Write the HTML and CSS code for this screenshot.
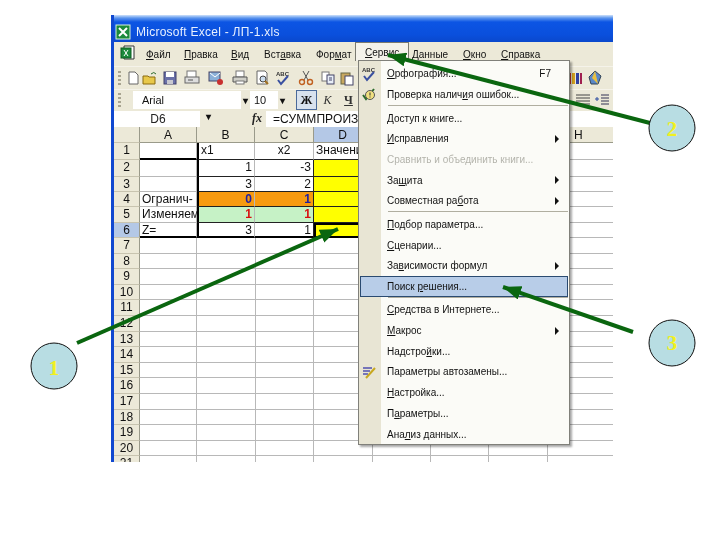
FILE: index.html
```html
<!DOCTYPE html>
<html lang="ru">
<head>
<meta charset="utf-8">
<title>Microsoft Excel - ЛП-1.xls</title>
<link rel="stylesheet" href="styles.css">
</head>
<body>
<div class="stage">
  <div class="window">
    <div class="titlebar">
      <svg class="appicon" width="16" height="16" viewBox="0 0 16 16"><rect x="1" y="1" width="14" height="14" fill="#1c8a3c" stroke="#d8f0d8"/><path d="M4 4l8 8M12 4l-8 8" stroke="#fff" stroke-width="2"/></svg>
      <span>Microsoft Excel - ЛП-1.xls</span>
    </div>
    <div class="menubar">
      <svg class="docicon" width="18" height="18" viewBox="0 0 18 18"><path d="M4 1h10v13H4z" fill="#fff" stroke="#333"/><rect x="1" y="3" width="10" height="10" fill="#1c8a3c" stroke="#0c5c20"/><path d="M4 5l4 6M8 5l-4 6" stroke="#fff"/></svg>
      <span><u>Ф</u>айл</span><span><u>П</u>равка</span><span><u>В</u>ид</span><span>Вст<u>а</u>вка</span><span>Фор<u>м</u>ат</span><span class="open"><u>С</u>ервис</span><span><u>Д</u>анные</span><span><u>О</u>кно</span><span><u>С</u>правка</span>
    </div>
    <div class="toolbar">
      <i class="grip"></i>
      <svg width="16" height="16" viewBox="0 0 16 16"><path d="M4 2h6l3 3v9H4z" fill="#fff" stroke="#666"/></svg>
      <svg width="16" height="16" viewBox="0 0 16 16"><path d="M1 6h5l1 1h6v7H1z" fill="#e8c84a" stroke="#8a6a10"/><path d="M9 4q3-3 5 0" fill="none" stroke="#2a6a2a"/></svg>
      <svg width="16" height="16" viewBox="0 0 16 16"><rect x="2" y="2" width="12" height="12" fill="#6a70a8" stroke="#40406a"/><rect x="4" y="2" width="8" height="5" fill="#fff"/><rect x="5" y="10" width="6" height="4" fill="#c8c8d0"/></svg>
      <svg width="16" height="16" viewBox="0 0 16 16"><rect x="3" y="1" width="9" height="7" fill="#fff" stroke="#777"/><rect x="1" y="7" width="14" height="6" fill="#ddd" stroke="#666"/><path d="M4 10h5" stroke="#555"/></svg>
      <svg width="16" height="16" viewBox="0 0 16 16"><rect x="1" y="2" width="11" height="9" fill="#8ab0d8" stroke="#446"/><path d="M2 3l5 4 5-4" fill="none" stroke="#fff"/><circle cx="12" cy="12" r="3" fill="#c83030"/></svg>
      <svg width="16" height="16" viewBox="0 0 16 16"><rect x="4" y="1" width="8" height="6" fill="#fff" stroke="#777"/><path d="M1 7h14v5H1z" fill="#cfcfc8" stroke="#555"/><rect x="4" y="11" width="8" height="3" fill="#fff" stroke="#777"/></svg>
      <svg width="16" height="16" viewBox="0 0 16 16"><path d="M3 1h8l2 2v11H3z" fill="#fff" stroke="#666"/><circle cx="9" cy="9" r="3" fill="#cde" stroke="#444"/><path d="M11 11l3 3" stroke="#a07020" stroke-width="2"/></svg>
      <svg width="16" height="16" viewBox="0 0 16 16"><text class="abc" x="1" y="6">ABC</text><path d="M3 10l3 4 7-8" fill="none" stroke="#3a50a0" stroke-width="2"/></svg>
      <svg width="16" height="16" viewBox="0 0 16 16"><path d="M5 1l5 9M11 1l-5 9" stroke="#555"/><circle cx="4" cy="12" r="2.5" fill="none" stroke="#c06020" stroke-width="1.4"/><circle cx="12" cy="12" r="2.5" fill="none" stroke="#c06020" stroke-width="1.4"/></svg>
      <svg width="16" height="16" viewBox="0 0 16 16"><rect x="2" y="2" width="7" height="9" fill="#fff" stroke="#777"/><rect x="7" y="5" width="7" height="9" fill="#e8eef8" stroke="#446"/><path d="M9 8h3M9 10h3" stroke="#446"/></svg>
      <svg width="16" height="16" viewBox="0 0 16 16"><rect x="2" y="3" width="9" height="11" fill="#c8a860" stroke="#664"/><rect x="6" y="6" width="8" height="9" fill="#fff" stroke="#446"/></svg>
      <i class="fill"></i>
      <svg width="16" height="16" viewBox="0 0 16 16"><rect x="1" y="3" width="3" height="11" fill="#c03030"/><rect x="5" y="3" width="3" height="11" fill="#d0a020"/><rect x="9" y="3" width="3" height="11" fill="#3040a0"/><rect x="13" y="3" width="2" height="11" fill="#a02050"/></svg>
      <svg width="16" height="16" viewBox="0 0 16 16"><path d="M8 1l6 5-3 8H4L2 7z" fill="#5a88c8" stroke="#345"/><path d="M8 1L5 8l6 6" fill="#e8c040"/></svg>
    </div>
    <div class="formatbar">
      <i class="grip"></i>
      <span class="fontbox">Arial</span><b class="drop">▾</b>
      <span class="sizebox">10</span><b class="drop">▾</b>
      <span class="btn on">Ж</span><span class="btn ital">К</span><span class="btn und">Ч</span>
      <i class="fill"></i>
      <svg width="16" height="14" viewBox="0 0 16 14"><path d="M1 2h14M1 5h14M1 8h14M1 11h14" stroke="#444"/></svg>
      <svg width="16" height="14" viewBox="0 0 16 14"><path d="M7 2h8M7 5h8M7 8h8M7 11h8" stroke="#335"/><path d="M1 6h4M3 4v4" stroke="#2a4aa0"/></svg>
    </div>
    <div class="formulabar">
      <span class="namebox">D6</span><b class="drop">▾</b>
      <em class="fx">fx</em>
      <span class="formula">=СУММПРОИЗ</span>
    </div>
    <div class="sheet">
      <div class="row head"><div class="rh"></div><div class="c a">A</div><div class="c b">B</div><div class="c cc">C</div><div class="c d sel">D</div><div class="c e">E</div><div class="c e">F</div><div class="c g">G</div><div class="c h">H</div></div>
      <div class="row tall"><div class="rh">1</div><div class="c a tb"></div><div class="c b l vb bb">x1</div><div class="c cc bb"><span class="mid">x2</span></div><div class="c d lv bb"><span class="clip">Значения</span></div><div class="c rest"></div></div>
      <div class="row tall"><div class="rh">2</div><div class="c a"></div><div class="c b r vb bb">1</div><div class="c cc r bb rb">-3</div><div class="c d yl bb"></div><div class="c rest"></div></div>
      <div class="row sm"><div class="rh">3</div><div class="c a"></div><div class="c b r vb bb">3</div><div class="c cc r bb rb">2</div><div class="c d yl bb"></div><div class="c rest"></div></div>
      <div class="row sm"><div class="rh">4</div><div class="c a">Огранич-</div><div class="c b r vb or blu">0</div><div class="c cc r or blu rb">1</div><div class="c d yl bb"></div><div class="c rest"></div></div>
      <div class="row sm"><div class="rh">5</div><div class="c a ov">Изменяем</div><div class="c b r vb gr red">1</div><div class="c cc r gr red rb">1</div><div class="c d yl bb"></div><div class="c rest"></div></div>
      <div class="row sm"><div class="rh sel">6</div><div class="c a tb">Z=</div><div class="c b r vb tb">3</div><div class="c cc r tb rb">1</div><div class="c d yl cur"></div><div class="c rest"></div></div>
      <div class="row"><div class="rh">7</div><div class="blank"></div></div>
      <div class="row"><div class="rh">8</div><div class="blank"></div></div>
      <div class="row"><div class="rh">9</div><div class="blank"></div></div>
      <div class="row"><div class="rh">10</div><div class="blank"></div></div>
      <div class="row"><div class="rh">11</div><div class="blank"></div></div>
      <div class="row"><div class="rh">12</div><div class="blank"></div></div>
      <div class="row"><div class="rh">13</div><div class="blank"></div></div>
      <div class="row"><div class="rh">14</div><div class="blank"></div></div>
      <div class="row"><div class="rh">15</div><div class="blank"></div></div>
      <div class="row"><div class="rh">16</div><div class="blank"></div></div>
      <div class="row"><div class="rh">17</div><div class="blank"></div></div>
      <div class="row"><div class="rh">18</div><div class="blank"></div></div>
      <div class="row"><div class="rh">19</div><div class="blank"></div></div>
      <div class="row"><div class="rh">20</div><div class="blank"></div></div>
      <div class="row"><div class="rh">21</div><div class="blank"></div></div>
    </div>
    <div class="menu">
      <div class="it"><svg class="mi" width="16" height="16" viewBox="0 0 16 16"><text class="abc" x="1" y="6">ABC</text><path d="M3 10l3 4 7-8" fill="none" stroke="#3a50a0" stroke-width="2"/></svg><span class="t"><u>О</u>рфография...</span><span class="k">F7</span></div>
      <div class="it"><svg class="mi" width="16" height="16" viewBox="0 0 16 16"><path d="M2 9l3 4 8-10" fill="none" stroke="#2a6a2a" stroke-width="2"/><circle cx="9" cy="9" r="4.5" fill="#f0e080" stroke="#555"/><path d="M9 6.500v3M9 10.500v1" stroke="#333"/></svg><span class="t">Проверка налич<u>и</u>я ошибок...</span></div>
      <div class="sep"></div>
      <div class="it"><span class="t">Доступ к книге...</span></div>
      <div class="it"><span class="t"><u>И</u>справления</span><i class="arr"></i></div>
      <div class="it off"><span class="t">Сравнить и объединить книги...</span></div>
      <div class="it"><span class="t">За<u>щ</u>ита</span><i class="arr"></i></div>
      <div class="it"><span class="t">Совместная ра<u>б</u>ота</span><i class="arr"></i></div>
      <div class="sep"></div>
      <div class="it"><span class="t"><u>П</u>одбор параметра...</span></div>
      <div class="it"><span class="t"><u>С</u>ценарии...</span></div>
      <div class="it"><span class="t">За<u>в</u>исимости формул</span><i class="arr"></i></div>
      <div class="it hot"><span class="t">Поиск <u>р</u>ешения...</span></div>
      <div class="sep"></div>
      <div class="it"><span class="t"><u>С</u>редства в Интернете...</span></div>
      <div class="it"><span class="t"><u>М</u>акрос</span><i class="arr"></i></div>
      <div class="it"><span class="t">Надстро<u>й</u>ки...</span></div>
      <div class="it"><svg class="mi" width="16" height="16" viewBox="0 0 16 16"><path d="M2 4h9M2 7h7M2 10h5" stroke="#5050b0" stroke-width="1.500"/><path d="M5 14l9-10" stroke="#c8a820" stroke-width="2"/></svg><span class="t">Параметры автозамены...</span></div>
      <div class="it"><span class="t"><u>Н</u>астройка...</span></div>
      <div class="it"><span class="t">П<u>а</u>раметры...</span></div>
      <div class="it"><span class="t">Ана<u>л</u>из данных...</span></div>
    </div>
  </div>
  <svg class="overlay" width="720" height="540" viewBox="0 0 720 540">
    <defs><marker id="head" markerUnits="userSpaceOnUse" markerWidth="20" markerHeight="14" refX="18" refY="7" orient="auto"><path class="headfill" d="M0 0L18 7L0 14z"/></marker></defs>
    <line class="arrow" x1="77" y1="343" x2="338" y2="229" marker-end="url(#head)"/>
    <line class="arrow" x1="650" y1="123" x2="388" y2="55" marker-end="url(#head)"/>
    <line class="arrow" x1="633" y1="332" x2="503" y2="287" marker-end="url(#head)"/>
    <circle class="bub" cx="54" cy="366" r="23"/>
    <circle class="bub" cx="672" cy="128" r="23"/>
    <circle class="bub" cx="672" cy="343" r="23"/>
    <text class="num" x="54" y="375">1</text>
    <text class="num" x="672" y="136">2</text>
    <text class="num" x="672" y="350">3</text>
  </svg>
</div>
</body>
</html>
```

FILE: styles.css
```css
* { box-sizing: border-box; }
html, body { margin: 0; padding: 0; background: #fff; }
.stage { position: relative; width: 720px; height: 540px; overflow: hidden; padding: 15px 0 0 111px; }
.window { position: relative; width: 502px; height: 447px; overflow: hidden; background: #ece9d8; border-left: 3px solid #1048d0; font-family: "Liberation Sans", Arial, sans-serif; font-size: 10px; color: #111; filter: blur(0.35px); }

.titlebar { height: 27px; margin-left: -3px; padding: 6px 0 0 4px; display: flex; align-items: center; gap: 5px; color: #e8f0ff; font-size: 12px; letter-spacing: .25px; background: linear-gradient(#cfe2fa 0, #5c95ee 3px, #0c55e4 7px, #0a4fdc 20px, #0a48cc 27px); }
.menubar { height: 25px; display: grid; grid-template-columns: 29px 38px 47px 33px 52px 49px 47px 51px 38px 60px; align-items: center; border-bottom: 1px solid #f5f3ea; }
.docicon { justify-self: start; margin-left: 6px; }
.menubar span { padding-left: 3px; white-space: nowrap; }
.menubar .open { align-self: start; height: 19px; margin-left: -7px; padding: 4px 0 0 9px; background: #f4f2ea; border: 1px solid #7a7a70; border-bottom: 0; }

.toolbar { height: 23px; display: grid; grid-template-columns: 11px 16px 18px 21px 23px 25px 24px 19px 23px 24px 19px 20px 208px 20px 20px; align-items: center; justify-items: center; border-bottom: 1px solid #f5f3ea; }
.grip { display: block; width: 3px; height: 14px; justify-self: start; margin-left: 4px; background: repeating-linear-gradient(#a8a490 0 2px, transparent 2px 4px); }
.abc { font: bold 6px "Liberation Sans", sans-serif; fill: #333; }

.formatbar { height: 20px; display: flex; align-items: center; }
.fontbox { width: 108px; height: 18px; margin-left: 12px; padding: 3px 0 0 9px; background: #fff; font-size: 11px; }
.sizebox { width: 28px; height: 18px; padding: 3px 0 0 4px; background: #fff; font-size: 11px; }
.drop { width: 9px; text-align: center; font-size: 10px; color: #111; }
.btn { width: 21px; height: 20px; display: flex; align-items: center; justify-content: center; font: bold 12px "Liberation Serif", serif; }
.btn.on { margin-left: 9px; background: #d8e2ee; border: 1px solid #4a6a9a; }
.ital { font-style: italic; font-weight: normal; color: #333; }
.und { text-decoration: underline; color: #333; }
.formatbar .fill { flex: 1; }
.formatbar svg { margin-right: 3px; }

.formulabar { height: 17px; display: flex; align-items: center; background: #fff; font-size: 12px; border-top: 1px solid #ece9d8; }
.namebox { width: 84px; text-align: center; margin-left: 2px; color: #222; }
.formulabar .drop { width: 16px; height: 100%; background: #ece9d8; }
.fx { width: 50px; height: 100%; padding-left: 36px; background: #ece9d8; font: italic bold 12px "Liberation Serif", serif; color: #222; }
.formula { padding-left: 7px; white-space: nowrap; letter-spacing: .1px; }

.sheet { background: #fff; font-size: 12px; }
.row { display: flex; height: 15.6px; }
.row.tall { height: 16.9px; }
.row.sm { height: 15.3px; }
.rh { width: 26px; flex: none; text-align: center; background: #ece9d8; border-right: 1px solid #9a9a8a; border-bottom: 1px solid #c8c4b0; line-height: 15px; font-size: 12px; }
.rh.sel { background: #b4c8e6; }
.c { flex: none; height: 100%; border-right: 1px solid #b8b8b8; border-bottom: 1px solid #b8b8b8; padding: 0 2px; line-height: 15px; white-space: nowrap; overflow: hidden; }
.a { width: 57px; }
.b { width: 58px; }
.cc { width: 59px; }
.d, .e { width: 58px; }
.g { width: 59px; }
.h { flex: 1; }
.rest { width: 244px; }
.head { height: 16px; }
.head .c { text-align: center; background: #ece9d8; border-color: #9a9a8a; line-height: 17px; }
.head .rh { background: #ece9d8; }
.head .sel { background: #b4c8e6; }
.head .h { text-align: left; padding-left: 27px; border-right: 0; }
.l { text-align: left; }
.r { text-align: right; }
.mid { display: block; text-align: center; }
.clip { display: block; width: 42px; overflow: hidden; }
.tb { border-bottom: 2px solid #000; }
.vb { border-left: 2px solid #000; }
.bb { border-bottom: 1px solid #222; }
.rb { border-right: 1px solid #222; }
.lv { border-left: 0; }
.ov { overflow: visible; }
.yl { background: #ffff00; }
.or { background: #f79a10; border-bottom: 1px solid #222; }
.gr { background: #c6f2c6; border-bottom: 1px solid #222; }
.blu { color: #2020a0; font-weight: bold; }
.red { color: #d81010; font-weight: bold; }
.cur { border: 2px solid #000; }
.blank { flex: 1; border-bottom: 1px solid #b8b8b8; background: linear-gradient(#b8b8b8, #b8b8b8) 56px 0 / 1px 100% no-repeat, linear-gradient(#b8b8b8, #b8b8b8) 115px 0 / 1px 100% no-repeat, linear-gradient(#b8b8b8, #b8b8b8) 173px 0 / 1px 100% no-repeat, linear-gradient(#b8b8b8, #b8b8b8) 232px 0 / 1px 100% no-repeat, linear-gradient(#b8b8b8, #b8b8b8) 290px 0 / 1px 100% no-repeat, linear-gradient(#b8b8b8, #b8b8b8) 348px 0 / 1px 100% no-repeat, linear-gradient(#b8b8b8, #b8b8b8) 407px 0 / 1px 100% no-repeat; }

.menu { position: absolute; left: 244px; top: 45px; width: 212px; height: 385px; padding: 2.6px 1px 0; border: 1px solid #80807a; background: linear-gradient(90deg, #e8e5d4 22px, #fbfbf7 22px); box-shadow: 2px 2px 2px rgba(0, 0, 0, .35); }
.it { position: relative; height: 20.7px; display: flex; align-items: center; padding: 0 8px 0 27px; }
.t { flex: 1; white-space: nowrap; }
.k { margin-right: 9px; }
.mi { position: absolute; left: 1px; top: 2px; }
.sep { height: 2.8px; margin-left: 28px; border-top: 1px solid #b0aea0; }
.off { color: #b4b4ac; }
.hot { background: #b8cde8; outline: 1px solid #2a4a70; outline-offset: -1px; }
.arr { width: 0; height: 0; margin-right: 1px; border-left: 4px solid #111; border-top: 4px solid transparent; border-bottom: 4px solid transparent; }

.overlay { position: absolute; left: 0; top: 0; }
.arrow { stroke: #0a660f; stroke-width: 4; }
.headfill { fill: #0a660f; }
.bub { fill: #b8dde3; stroke: #111; stroke-width: 1; }
.num { font: bold 21px "Liberation Serif", serif; fill: #f0f020; text-anchor: middle; }
```
